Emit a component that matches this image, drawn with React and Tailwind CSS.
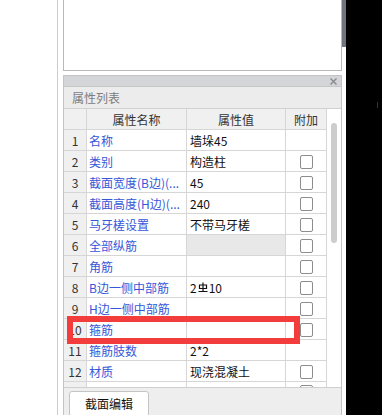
import React from "react";

const FONT = { fontFamily: '"Noto Sans CJK SC", "Noto Sans", sans-serif' };

function Rebar() {
  return (
    <span className="inline-flex items-center">
      2
      <svg width="10" height="11" viewBox="0 0 10 11" className="mx-[1px] mb-[1px]">
        <path d="M5 0.5V9.5M1.5 3H8.5V6.5H1.5ZM0.5 9.5H9.5" fill="none" stroke="#111" strokeWidth="1.2" />
      </svg>
      10
    </span>
  );
}

const rows = [
  { n: "1", name: "名称", val: "墙垛45", cb: false },
  { n: "2", name: "类别", val: "构造柱", cb: true },
  { n: "3", name: "截面宽度(B边)(...", val: "45", cb: true },
  { n: "4", name: "截面高度(H边)(...", val: "240", cb: true },
  { n: "5", name: "马牙槎设置", val: "不带马牙槎", cb: true },
  { n: "6", name: "全部纵筋", val: "", cb: true, gray: true },
  { n: "7", name: "角筋", val: "", cb: true },
  { n: "8", name: "B边一侧中部筋", val: "rebar", cb: true },
  { n: "9", name: "H边一侧中部筋", val: "", cb: true },
  { n: "10", name: "箍筋", val: "", cb: true },
  { n: "11", name: "箍筋肢数", val: "2*2", cb: false },
  { n: "12", name: "材质", val: "现浇混凝土", cb: true },
];

function Checkbox() {
  return <div className="w-[13px] h-[14px] rounded-[2px] border border-[#8c8c8c] bg-white" />;
}

function Row({ r }) {
  return (
    <div className="flex shrink-0 h-[21px] border-b border-[#d6d6d6] text-[12px] leading-[20px]">
      <div className="w-[23px] shrink-0 border-r border-[#d6d6d6] bg-[#f0f0f0] text-center text-[#333] pt-[1px]">{r.n}</div>
      <div className="w-[100px] shrink-0 border-r border-[#d6d6d6] pl-[2px] text-[#3557d8] whitespace-nowrap overflow-hidden pt-[1px]">{r.name}</div>
      <div className={`w-[99px] shrink-0 border-r border-[#d6d6d6] pl-[3px] text-[#111] whitespace-nowrap overflow-hidden pt-[1px] ${r.gray ? "bg-[#e8e8e8]" : "bg-white"}`}>
        {r.val === "rebar" ? <Rebar /> : r.val}
      </div>
      <div className="w-[41px] shrink-0 border-r border-[#d6d6d6] flex items-center justify-center pt-[1px]">
        {r.cb ? <Checkbox /> : null}
      </div>
    </div>
  );
}

export default function App() {
  return (
    <div className="relative w-[382px] h-[415px] overflow-hidden flex bg-white" style={FONT}>
      <div className="w-[57px] shrink-0 bg-white" />
      <div className="w-[1px] shrink-0 bg-[#cdcdcd]" />
      <div className="w-[5px] shrink-0 bg-white" />
      <div className="w-[279px] shrink-0 flex flex-col">
        <div className="h-[71px] shrink-0 border-x border-b border-[#b9b9b9] bg-white" />
        <div className="h-[4px] shrink-0" />
        <div className="flex-1 flex flex-col border-x border-t border-[#c3c3c3] bg-[#eeeeee]">
          <div className="h-[11px] shrink-0 bg-[#d4d5d8] border-b border-[#c6c6c6] flex items-center justify-end pr-[4px]">
            <svg width="7" height="7" viewBox="0 0 7 7">
              <path d="M0.5 0.5L6.5 6.5M6.5 0.5L0.5 6.5" stroke="#8a8a8a" strokeWidth="1.4" />
            </svg>
          </div>
          <div className="h-[22px] shrink-0 bg-[#ececec] border-b border-[#d0d0d0] pl-[8px] text-[12px] leading-[21px] text-[#7d7d7d]">
            属性列表
          </div>
          <div className="h-[279px] shrink-0 flex border-b border-[#cfcfcf] overflow-hidden">
            <div className="flex flex-col">
              <div className="flex shrink-0 h-[21px] border-b border-[#d6d6d6] text-[12px] leading-[20px] text-[#333] bg-[#f0f0f0]">
                <div className="w-[23px] shrink-0 border-r border-[#d6d6d6]" />
                <div className="w-[100px] shrink-0 border-r border-[#d6d6d6] text-center pt-[1px]">属性名称</div>
                <div className="w-[99px] shrink-0 border-r border-[#d6d6d6] text-center pt-[1px]">属性值</div>
                <div className="w-[41px] shrink-0 border-r border-[#d6d6d6] text-center pt-[1px]">附加</div>
              </div>
              <div className="flex flex-col bg-white">
                {rows.map((r) => (
                  <Row key={r.n} r={r} />
                ))}
                <div className="flex shrink-0 h-[21px] text-[12px]">
                  <div className="w-[23px] shrink-0 border-r border-[#d6d6d6] bg-[#f0f0f0]" />
                  <div className="w-[100px] shrink-0 border-r border-[#d6d6d6]" />
                  <div className="w-[99px] shrink-0 border-r border-[#d6d6d6]" />
                  <div className="w-[41px] shrink-0 border-r border-[#d6d6d6] flex justify-center pt-[3px]">
                    <Checkbox />
                  </div>
                </div>
              </div>
            </div>
            <div className="flex-1 bg-white pt-[14px] pl-[4px]">
              <div className="w-[6px] h-[120px] rounded-full bg-[#cdcdcd]" />
            </div>
          </div>
          <div className="flex-1 pl-[5px] pt-[3px]">
            <div className="w-[80px] h-[26px] rounded-[3px] border border-[#c4c4c4] bg-white text-center text-[12px] leading-[24px] text-[#111]">
              截面编辑
            </div>
          </div>
        </div>
      </div>
      <div className="w-[4px] shrink-0 flex flex-col">
        <div className="h-[47px] bg-[#6f747e]" />
        <div className="flex-1 bg-white" />
      </div>
      <div className="w-[36px] shrink-0 bg-black" />
      <div className="absolute left-[377px] top-[102px] w-[1px] h-[6px] bg-[#3d2a58]" />
      <div className="absolute left-[67px] top-[316px] w-[233px] h-[28px] border-[6px] border-[#f33c3c]" />
    </div>
  );
}
